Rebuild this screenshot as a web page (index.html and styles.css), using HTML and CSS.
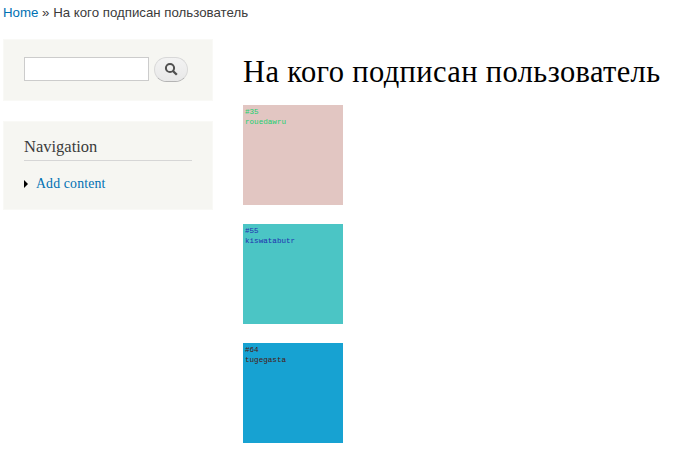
FILE: index.html
```html
<!DOCTYPE html>
<html lang="ru">
<head>
<meta charset="utf-8">
<title>На кого подписан пользователь</title>
<link rel="stylesheet" href="styles.css">
</head>
<body>
<nav class="breadcrumb"><a href="#">Home</a> » <span>На кого подписан пользователь</span></nav>
<div class="layout">
  <aside class="sidebar">
    <form class="block search">
      <input class="search-input" type="text" aria-label="Search">
      <button class="search-button" type="button" aria-label="Search">
        <svg width="14" height="14" viewBox="0 0 14 14" fill="none" stroke="#505050"><circle cx="6" cy="6" r="4.1" stroke-width="2"/><path d="M9 9L12.8 12.8" stroke-width="2.3"/></svg>
      </button>
    </form>
    <section class="block navigation">
      <h2>Navigation</h2>
      <ul>
        <li><svg width="4" height="8" viewBox="0 0 4 8"><path d="M0 0L4 4L0 8Z"/></svg><a href="#">Add content</a></li>
      </ul>
    </section>
  </aside>
  <main class="content">
    <h1>На кого подписан пользователь</h1>
    <div class="users">
      <div class="user rose">#35<br>rouedawru</div>
      <div class="user teal">#55<br>kiswatabutr</div>
      <div class="user blue">#64<br>tugegasta</div>
    </div>
  </main>
</div>
</body>
</html>
```
FILE: styles.css
```css
* { box-sizing: border-box; }
body {
  margin: 0;
  height: 453px;
  overflow: hidden;
  background: #fff;
  color: #3b3b3b;
  font-family: "Liberation Serif", serif;
}
a { color: #0071b3; text-decoration: none; }
.breadcrumb {
  height: 39px;
  padding: 5px 3px 0;
  font: 13.28px/16px "Liberation Sans", sans-serif;
  white-space: nowrap;
}
.layout { display: flex; gap: 30px; padding-left: 3px; }
.sidebar { width: 210px; flex: none; }
.block {
  background: #f6f6f2;
  border: 1px solid #f9f9f6;
  padding: 0 20px;
}
.search {
  display: flex;
  gap: 5px;
  height: 62px;
  margin: 0 0 20px;
  padding-top: 17px;
}
.search-input {
  width: 125px;
  height: 24px;
  border: 1px solid #ccc;
  background: #fff;
  padding: 2px;
}
.search-button {
  display: flex;
  align-items: center;
  justify-content: center;
  width: 34px;
  height: 25px;
  padding: 0 0 1px;
  border: 1px solid #d8d8d8;
  border-bottom-color: #b4b4b4;
  border-radius: 13px;
  background: linear-gradient(#f3f3f3, #e8e8e8);
}
.navigation { height: 89px; padding-top: 14px; }
.navigation h2 {
  margin: 0 0 15px;
  height: 25px;
  border-bottom: 1px solid #d6d6d6;
  font-size: 16.5px;
  font-weight: normal;
  line-height: 22px;
}
.navigation ul { list-style: none; margin: 0; padding: 0; }
.navigation li { display: flex; align-items: center; gap: 8px; font-size: 13.8px; line-height: 16px; letter-spacing: .15px; }
.content { padding-top: 15px; }
h1 {
  margin: 0 0 15px;
  height: 36px;
  color: #000;
  font-size: 30.5px;
  font-weight: normal;
  line-height: 37px;
  letter-spacing: .37px;
  white-space: nowrap;
}
.users { display: grid; gap: 19px; }
.user {
  width: 100px;
  height: 100px;
  padding: 2px;
  font: 7.6px/10px "Liberation Mono", monospace;
}
.rose { background: #e2c6c2; color: #20d070; }
.teal { background: #4bc5c5; color: #2030b0; }
.blue { background: #17a2d2; color: #4a1810; }
```
